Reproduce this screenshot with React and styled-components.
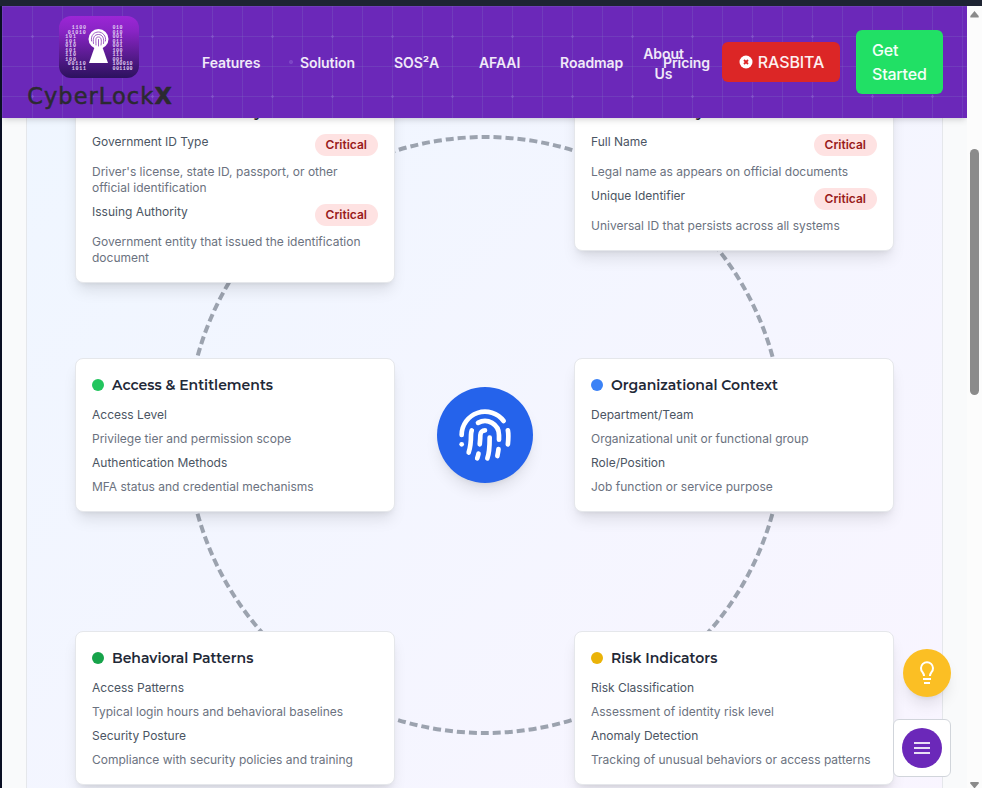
import React from "react";
import styled, { createGlobalStyle } from "styled-components";

const Global = createGlobalStyle`
  * { box-sizing: border-box; }
  html, body { margin: 0; padding: 0; height: 788px; overflow: hidden; }
  body { font-family: Inter, sans-serif; color: #1f2937; background: #f9fafb; }
  h3, p { margin: 0; }
  button { border: 0; font-family: inherit; }
`;

const Window = styled.div`
  width: 982px;
  height: 788px;
  display: flex;
  flex-direction: column;
  overflow: hidden;
`;
const TopStrip = styled.div`
  flex: none;
  height: 6px;
  background: #1e2433;
`;
const Body = styled.div`
  display: flex;
  height: 782px;
`;
const LeftEdge = styled.div`
  width: 2px;
  background: #0a0f24;
`;
const Page = styled.div`
  width: 965px;
  height: 782px;
  overflow: hidden;
  background: #f9fafb;
`;

const Header = styled.header`
  position: relative;
  z-index: 3;
  height: 112px;
  display: flex;
  align-items: center;
  padding-left: 24px;
  background-color: #6b28b9;
  background-image:
    radial-gradient(circle at 289px 56px, rgba(150, 110, 215, 0.4) 1.6px, transparent 2.4px),
    radial-gradient(circle at 30.5px 30.5px, rgba(150, 110, 215, 0.4) 1px, transparent 1.6px),
    linear-gradient(to right, rgba(130, 130, 200, 0.22) 1px, transparent 1px),
    linear-gradient(to bottom, rgba(130, 130, 200, 0.22) 1px, transparent 1px);
  background-size: 965px 112px, 60px 60px, 30px 30px, 30px 30px;
  box-shadow: 0 4px 6px -1px rgba(0, 0, 0, 0.1), 0 2px 4px -2px rgba(0, 0, 0, 0.1);
`;
const Brand = styled.div`
  width: 146px;
  height: 112px;
  display: flex;
  flex-direction: column;
  align-items: center;
  padding-top: 10px;
`;
const Wordmark = styled.div`
  font: 22.5px/26px "DejaVu Sans", sans-serif;
  letter-spacing: 1.05px;
  color: #2b2a31;
  margin: 5px -2px 0 0;
  white-space: nowrap;
  -webkit-text-stroke: 0.5px #2b2a31;
  b { font-weight: 700; }
`;
const Nav = styled.nav`
  display: flex;
  align-items: center;
  width: 520px;
  margin-left: 30px;
  padding-top: 2px;
  gap: 40px;
`;
const NavLink = styled.a`
  flex: none;
  width: ${(p) => p.$w}px;
  margin-left: ${(p) => p.$shift || 0}px;
  padding-top: ${(p) => (p.$wrap ? 2 : 0)}px;
  font-size: 14px;
  line-height: 20px;
  font-weight: 600;
  letter-spacing: -0.08px;
  text-align: center;
  color: #f0e9f8;
  white-space: ${(p) => (p.$wrap ? "normal" : "nowrap")};
`;
const AlertButton = styled.button`
  flex: none;
  display: flex;
  align-items: center;
  justify-content: center;
  gap: 5px;
  width: 118px;
  height: 40px;
  padding: 0 0 0 1px;
  border-radius: 6px;
  background: #dc2626;
  color: #fdf0f0;
  font-size: 16px;
  font-weight: 500;
  letter-spacing: -0.1px;
`;
const StartButton = styled.button`
  flex: none;
  width: 87px;
  height: 64px;
  margin-left: 16px;
  padding: 8px 16px;
  border-radius: 6px;
  background: #21e065;
  color: #f4fff8;
  font-size: 16px;
  line-height: 24px;
  font-weight: 500;
  letter-spacing: -0.2px;
  text-align: left;
`;

const Content = styled.main`
  height: 670px;
  overflow: hidden;
  padding: 0 24px;
`;
const Panel = styled.section`
  position: relative;
  width: 917px;
  height: 900px;
  margin-top: -33px;
  padding: 0 48px;
  border: 1px solid #e5e7eb;
  border-width: 0 1px;
  background: linear-gradient(to bottom right, #eff6ff, #faf5ff);
`;
const Ring = styled.svg`
  position: absolute;
  left: 157.5px;
  top: 50px;
`;
const Hub = styled.div`
  position: absolute;
  left: 409.5px;
  top: 302px;
  width: 96px;
  height: 96px;
  display: flex;
  align-items: center;
  justify-content: center;
  border-radius: 50%;
  background: #2563eb;
  box-shadow: 0 10px 15px -3px rgba(0, 0, 0, 0.1), 0 4px 6px -4px rgba(0, 0, 0, 0.1);
`;
const Board = styled.div`
  position: relative;
  display: grid;
  grid-template-columns: 320px 320px;
  grid-auto-rows: 273px;
  justify-content: space-between;
  align-items: start;
`;
const Card = styled.article`
  display: flex;
  flex-direction: column;
  gap: 8px;
  padding: 16px;
  background: #fff;
  border: 1px solid #e5e7eb;
  border-radius: 8px;
  box-shadow: 0 10px 15px -3px rgba(0, 0, 0, 0.1), 0 4px 6px -4px rgba(0, 0, 0, 0.1);
`;
const CardTitle = styled.h3`
  display: flex;
  align-items: center;
  gap: 8px;
  height: 20px;
  margin-bottom: 4px;
  font: 600 14px/20px Montserrat, Inter, sans-serif;
  color: #1f2937;
  white-space: nowrap;
`;
const Dot = styled.span`
  width: 12px;
  height: 12px;
  border-radius: 50%;
  background: ${(p) => p.$color};
`;
const FieldRow = styled.div`
  display: flex;
  justify-content: space-between;
  align-items: flex-start;
`;
const FieldName = styled.span`
  font-size: 12px;
  line-height: 16px;
  color: #4b5563;
`;
const FieldNote = styled.p`
  font-size: 12px;
  line-height: 16px;
  color: #6b7280;
`;
const Badge = styled.span`
  height: 22px;
  padding: 3px 11px;
  border-radius: 11px;
  background: #fee2e2;
  color: #991b1b;
  font-size: 12px;
  line-height: 16px;
  font-weight: 600;
`;

const TipButton = styled.button`
  position: fixed;
  z-index: 4;
  left: 903px;
  top: 649px;
  width: 48px;
  height: 48px;
  padding: 0;
  display: grid;
  place-items: center;
  border-radius: 50%;
  background: #fbbf24;
  box-shadow: 0 10px 15px -3px rgba(0, 0, 0, 0.1), 0 4px 6px -4px rgba(0, 0, 0, 0.1);
`;
const MenuBox = styled.div`
  position: fixed;
  z-index: 4;
  left: 893px;
  top: 719px;
  width: 58px;
  height: 58px;
  display: grid;
  place-items: center;
  background: #fff;
  border: 1px solid #d1d5db;
  border-radius: 6px;
`;
const MenuButton = styled.button`
  width: 40px;
  height: 40px;
  padding: 0;
  display: grid;
  place-items: center;
  border-radius: 50%;
  background: #6b28b9;
`;

const Scrollbar = styled.div`
  width: 15px;
  height: 782px;
  display: flex;
  flex-direction: column;
  align-items: center;
  padding-top: 5px;
  background: #fcfcfc;
`;
const Thumb = styled.div`
  width: 9px;
  height: 246px;
  margin: 131px 0 387px;
  border-radius: 5px;
  background: #8b8b8b;
  flex: none;
`;

const bitsLeft = [
  ["1100", 12.7], ["01010", 8.7], ["101", 6.2], ["101", 6.2], ["010", 6.2], ["101", 6.2], ["110", 6.2], ["100", 6.2], ["00110", 8.7], ["1011", 12.7],
];
const bitsRight = ["010", "010", "001", "011", "001", "100", "111", "001", "100010", "001100"];

function LogoMark() {
  return (
    <svg width="80" height="62" viewBox="0 0 80 62">
      <defs>
        <linearGradient id="tile" x1="0" y1="0" x2="0" y2="1">
          <stop offset="0" stopColor="#9c26d6" />
          <stop offset="0.25" stopColor="#8824c4" />
          <stop offset="1" stopColor="#2c125e" />
        </linearGradient>
      </defs>
      <rect width="80" height="62" rx="12" fill="url(#tile)" />
      <g fill="#e0cff2" fontFamily="Liberation Mono, monospace" fontSize="5" fontWeight="700">
        {bitsLeft.map(([t, x], i) => (
          <text key={i} x={x} y={13 + i * 4.53} textLength={t.length * 3.6}>{t}</text>
        ))}
        {bitsRight.map((t, i) => (
          <text key={i} x="53.500" y={13 + i * 4.53} textLength={t.length * 3.35}>{t}</text>
        ))}
      </g>
      <path d="M36 30h7l6 17H30z" fill="#fff" />
      <circle cx="39.5" cy="23" r="10" fill="#fff" />
      <g fill="none" stroke="#8636b5" strokeWidth="0.8" strokeLinecap="round">
        <path d="M32.500 25c-1-6 3-9 7-9s8 4 7 9" />
        <path d="M34.500 27.500c-1-6 1-9 5-9s6 4 5 9" />
        <path d="M37 29c0-5-1-8 2.500-8s3 5 2.500 8" />
        <path d="M39.500 30v-6.500" />
      </g>
    </svg>
  );
}

function Fingerprint() {
  return (
    <svg width="56" height="56" viewBox="0 0 24 24" fill="none" stroke="#fff" strokeWidth="2" strokeLinecap="round" strokeLinejoin="round">
      <path d="M12 10a2 2 0 0 0-2 2c0 1.020-.1 2.510-.26 4" />
      <path d="M14 13.120c0 2.380 0 6.380-1 8.880" />
      <path d="M17.290 21.020c.12-.6.430-2.300.5-3.020" />
      <path d="M2 12a10 10 0 0 1 18-6" />
      <path d="M2 16h.01" />
      <path d="M21.800 16c.2-2 .131-5.354 0-6" />
      <path d="M5 19.500C5.500 18 6 15 6 12a6 6 0 0 1 .34-2" />
      <path d="M8.650 22c.21-.66.450-1.320.57-2" />
      <path d="M9 6.800a6 6 0 0 1 9 5.200v2" />
    </svg>
  );
}

const cards = [
  { title: "Government Identity", color: "#dc2626", fields: [
    ["Government ID Type", "Driver's license, state ID, passport, or other official identification", true],
    ["Issuing Authority", "Government entity that issued the identification document", true]] },
  { title: "Core Identity", color: "#2563eb", fields: [
    ["Full Name", "Legal name as appears on official documents", true],
    ["Unique Identifier", "Universal ID that persists across all systems", true]] },
  { title: "Access & Entitlements", color: "#22c55e", fields: [
    ["Access Level", "Privilege tier and permission scope"],
    ["Authentication Methods", "MFA status and credential mechanisms"]] },
  { title: "Organizational Context", color: "#3b82f6", fields: [
    ["Department/Team", "Organizational unit or functional group"],
    ["Role/Position", "Job function or service purpose"]] },
  { title: "Behavioral Patterns", color: "#16a34a", fields: [
    ["Access Patterns", "Typical login hours and behavioral baselines"],
    ["Security Posture", "Compliance with security policies and training"]] },
  { title: "Risk Indicators", color: "#eab308", fields: [
    ["Risk Classification", "Assessment of identity risk level"],
    ["Anomaly Detection", "Tracking of unusual behaviors or access patterns"]] },
];

export default function App() {
  return (
    <>
      <Global />
      <Window>
        <TopStrip />
        <Body>
          <LeftEdge />
          <Page>
            <Header>
              <Brand>
                <LogoMark />
                <Wordmark>CyberLock<b>X</b></Wordmark>
              </Brand>
              <Nav>
                <NavLink $w={58}>Features</NavLink>
                <NavLink $w={54}>Solution</NavLink>
                <NavLink $w={45}>SOS²A</NavLink>
                <NavLink $w={41}>AFAAI</NavLink>
                <NavLink $w={63}>Roadmap</NavLink>
                <NavLink $w={41} $shift={-20} $wrap>About Us</NavLink>
                <NavLink $w={47} $shift={-61}>Pricing</NavLink>
              </Nav>
              <AlertButton>
                <svg width="14" height="14" viewBox="0 0 14 14">
                  <circle cx="7" cy="7" r="6.500" fill="#fff" />
                  <path d="M5 5l4 4M9 5l-4 4" stroke="#dc2626" strokeWidth="1.800" />
                </svg>
                RASBITA
              </AlertButton>
              <StartButton>Get Started</StartButton>
            </Header>
            <Content>
              <Panel>
                <Ring width="600" height="600" viewBox="0 0 600 600">
                  <circle cx="300" cy="300" r="298" fill="none" stroke="#9ca3af" strokeWidth="4" strokeDasharray="8 4.0026" strokeDashoffset="4" />
                </Ring>
                <Board>
                  {cards.map((c) => (
                    <Card key={c.title}>
                      <CardTitle><Dot $color={c.color} />{c.title}</CardTitle>
                      {c.fields.map(([name, note, critical]) => (
                        <React.Fragment key={name}>
                          <FieldRow>
                            <FieldName>{name}</FieldName>
                            {critical && <Badge>Critical</Badge>}
                          </FieldRow>
                          <FieldNote>{note}</FieldNote>
                        </React.Fragment>
                      ))}
                    </Card>
                  ))}
                </Board>
                <Hub><Fingerprint /></Hub>
              </Panel>
            </Content>
          </Page>
          <Scrollbar>
            <svg width="9" height="7" viewBox="0 0 9 7"><path d="M4.500 0L9 5.500V7H0V5.500z" fill="#8b8b8b" /></svg>
            <Thumb />
            <svg width="9" height="7" viewBox="0 0 9 7"><path d="M4.500 7L9 1.500V0H0v1.500z" fill="#8b8b8b" /></svg>
          </Scrollbar>
        </Body>
      </Window>
      <TipButton>
        <svg width="24" height="24" viewBox="0 0 24 24" fill="none" stroke="#fff" strokeWidth="2">
          <path d="M9 15c0-1.500-.5-2.500-1.500-3.800a6 6 0 1 1 9 0C15.500 12.500 15 13.500 15 15" />
          <path d="M8 18h8M9 22h6" />
        </svg>
      </TipButton>
      <MenuBox>
        <MenuButton>
          <svg width="16" height="12" viewBox="0 0 16 12" stroke="#e9dff5" strokeWidth="1.800"><path d="M0 1h16M0 6h16M0 11h16" /></svg>
        </MenuButton>
      </MenuBox>
    </>
  );
}
